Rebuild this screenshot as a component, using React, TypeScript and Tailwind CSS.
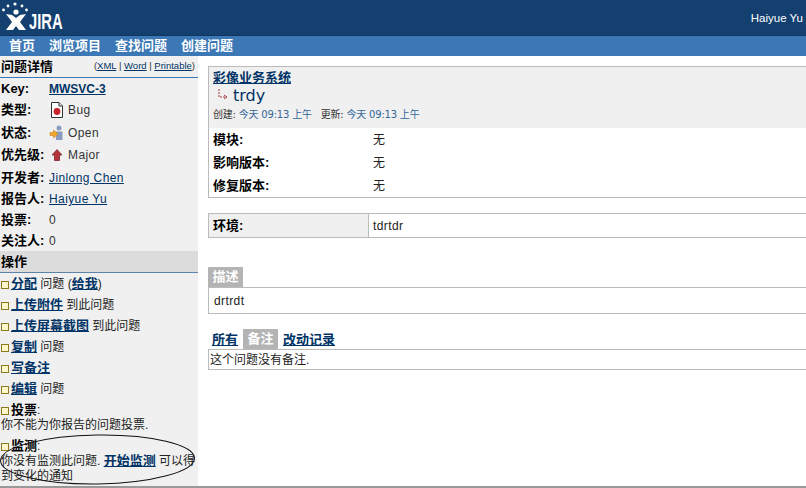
import type { ReactNode } from "react";

const FONT = "font-['Liberation_Sans','Noto_Sans_CJK_SC',sans-serif]";

function A({ children, bold = false }: { children: ReactNode; bold?: boolean }) {
  return (
    <a href="#" className={`text-[#003366] underline ${bold ? "text-[13px] font-bold leading-none" : ""}`}>
      {children}
    </a>
  );
}

function Logo() {
  return (
    <div className="flex items-start">
      <svg width="29" height="32" viewBox="0 0 29 32" fill="white">
        <circle cx="3.5" cy="10" r="1.4" />
        <circle cx="8" cy="6" r="1.4" />
        <circle cx="15" cy="4" r="1.6" />
        <circle cx="22" cy="6" r="1.4" />
        <circle cx="26.5" cy="10" r="1.4" />
        <circle cx="16" cy="12" r="2.6" />
        <path d="M6 14 L12 15 L16 18 L20 15 L26 14 L20 22 L26 30 L19 30 L16 26 L13 30 L6 30 L12 22 Z" />
      </svg>
      <span className="mt-[13px] origin-left scale-x-[0.67] text-[22px] font-bold leading-[18px] text-white">
        JIRA
      </span>
    </div>
  );
}

function Field({ label, h = "h-[21px]", children }: { label: string; h?: string; children: ReactNode }) {
  return (
    <div className={`flex ${h} items-center pl-[1px]`}>
      <span className="w-[48px] shrink-0 text-[13px] font-bold text-black">{label}</span>
      <div className="flex items-center tracking-[0.4px] text-[#333]">{children}</div>
    </div>
  );
}

function BugIcon() {
  return (
    <svg width="16" height="16" viewBox="0 0 16 16" className="mr-[3px]">
      <path d="M2.5 0.5 H10 L13.5 4 V15.5 H2.5 Z" fill="white" stroke="#333" />
      <path d="M10 0.5 V4 H13.5" fill="#ddd" stroke="#333" />
      <circle cx="8" cy="9.5" r="3.4" fill="#c8232c" />
    </svg>
  );
}

function OpenIcon() {
  return (
    <svg width="16" height="16" viewBox="0 0 16 16" className="mr-[3px]">
      <circle cx="10" cy="3" r="2.5" fill="#8a9dc0" />
      <path d="M6.5 6.5 H13.5 V15 H7 Z" fill="#8a9dc0" />
      <path d="M1 7.5 H4.5 V5 L9 9 L4.5 13 V10.5 H1 Z" fill="#f5a623" stroke="#b9761a" strokeWidth="0.5" />
    </svg>
  );
}

function MajorIcon() {
  return (
    <svg width="16" height="16" viewBox="0 0 16 16" className="mr-[3px]">
      <path d="M8 2.5 L13 8 H10.5 V13.5 H5.5 V8 H3 Z" fill="#b5333a" stroke="#6e1a1e" strokeWidth="0.7" />
    </svg>
  );
}

function Action({ children, sub }: { children: ReactNode; sub?: ReactNode }) {
  return (
    <div className="mb-[6px] leading-[15px]">
      <div className="flex h-[15px] items-center pl-[1px]">
        <span className="mr-[2px] h-[8px] w-[8px] shrink-0 border border-[#8a7a20] bg-[#fdf6c8]" />
        <span className="text-[#222]">{children}</span>
      </div>
      {sub && <div className="pl-[1px] text-[#222]">{sub}</div>}
    </div>
  );
}

function Sidebar() {
  return (
    <aside className="relative w-[198px] shrink-0 bg-[#f0f0f0]">
      <div className="flex h-[22px] items-center justify-between border-b border-[#3c78b5] pl-[1px] pr-[3px]">
        <span className="text-[13px] font-bold text-black">问题详情</span>
        <span className="text-[9.5px] text-[#333]">
          (<A>XML</A> | <A>Word</A> | <A>Printable</A>)
        </span>
      </div>
      <Field label="Key:">
        <span className="tracking-normal">
          <a href="#" className="font-bold text-[#003366] underline">
            MWSVC-3
          </a>
        </span>
      </Field>
      <Field label="类型:" h="h-[22px]">
        <BugIcon />
        Bug
      </Field>
      <Field label="状态:" h="h-[23px]">
        <OpenIcon />
        Open
      </Field>
      <Field label="优先级:" h="h-[22px]">
        <MajorIcon />
        Major
      </Field>
      <Field label="开发者:" h="h-[23px]">
        <A>Jinlong Chen</A>
      </Field>
      <Field label="报告人:" h="h-[20px]">
        <A>Haiyue Yu</A>
      </Field>
      <Field label="投票:">0</Field>
      <Field label="关注人:">0</Field>
      <div className="flex h-[22px] items-center border-b border-[#5d84a8] bg-[#dcdcdc] pl-[1px] text-[13px] font-bold text-black">
        操作
      </div>
      <div className="pt-[4px]">
        <Action>
          <A bold>分配</A> 问题 (<A bold>给我</A>)
        </Action>
        <Action>
          <A bold>上传附件</A> 到此问题
        </Action>
        <Action>
          <A bold>上传屏幕截图</A> 到此问题
        </Action>
        <Action>
          <A bold>复制</A> 问题
        </Action>
        <Action>
          <A bold>写备注</A>
        </Action>
        <Action>
          <A bold>编辑</A> 问题
        </Action>
        <Action sub="你不能为你报告的问题投票.">
          <b className="text-[13px] leading-none text-black">投票</b>:
        </Action>
        <Action
          sub={
            <>
              你没有监测此问题. <A bold>开始监测</A> 可以得到变化的通知
            </>
          }
        >
          <b className="text-[13px] leading-none text-black">监测</b>:
        </Action>
      </div>
      {/* hand-drawn annotation over the watch action */}
      <svg width="198" height="52" viewBox="0 0 198 52" className="absolute bottom-0 left-0" fill="none">
        <ellipse cx="97.5" cy="25.5" rx="97" ry="24.5" stroke="#111" strokeWidth="1" transform="rotate(-0.8 97 26)" />
      </svg>
    </aside>
  );
}

function Row({ label, value }: { label: string; value: string }) {
  return (
    <div className="flex h-[23px] items-center">
      <span className="w-[160px] shrink-0 pl-[4px] text-[13px] font-bold text-black">{label}</span>
      <span className="pl-[4px] text-[#222]">{value}</span>
    </div>
  );
}

function Main() {
  return (
    <main className="min-w-0 flex-1 pl-[10px] pt-[10px]">
      <div className="border border-r-0 border-[#bbbbbb]">
        <div className="h-[61px] bg-[#f0f0f0] pl-[4px] pt-[4px]">
          <div className="leading-[15px]">
            <A bold>彩像业务系统</A>
          </div>
          <div className="flex h-[20px] items-center pl-[4px]">
            <svg width="13" height="14" viewBox="0 0 13 14" fill="none" stroke="#a5413f" className="mr-[3px]">
              <path d="M2 0 V8 H9" strokeDasharray="2 1" />
              <path d="M7 6 L10 8 L7 10" />
            </svg>
            <span className="font-['DejaVu_Sans',sans-serif] text-[16px] text-[#003366]">trdy</span>
          </div>
          <div className="mt-[2px] flex font-['DejaVu_Sans','Noto_Sans_CJK_SC',sans-serif] text-[10px] leading-[14px] tracking-[-0.2px] text-[#333]">
            <span>
              创建: <span className="text-[#336699]">今天 09:13 上午</span>
            </span>
            <span className="ml-[9px]">
              更新: <span className="text-[#336699]">今天 09:13 上午</span>
            </span>
          </div>
        </div>
        <Row label="模块:" value="无" />
        <Row label="影响版本:" value="无" />
        <Row label="修复版本:" value="无" />
      </div>

      <div className="mt-[15px] flex h-[25px] border border-r-0 border-[#bbbbbb]">
        <div className="flex w-[160px] items-center border-r border-[#bbbbbb] bg-[#f0f0f0] pl-[4px] text-[13px] font-bold text-black">
          环境:
        </div>
        <div className="flex items-center pl-[4px] tracking-[0.4px] text-[#222]">tdrtdr</div>
      </div>

      <div className="mt-[29px] flex h-[20px] w-[35px] items-center justify-center bg-[#b4b4b4] text-[13px] font-bold text-white">
        描述
      </div>
      <div className="flex h-[27px] items-center border border-r-0 border-[#bbbbbb] pl-[5px] tracking-[0.4px] text-[#222]">
        drtrdt
      </div>

      <div className="mt-[15px] flex h-[20px] items-center pl-[4px]">
        <A bold>所有</A>
        <span className="mx-[5px] flex h-[20px] w-[35px] items-center justify-center bg-[#b4b4b4] text-[13px] font-bold text-white">
          备注
        </span>
        <A bold>改动记录</A>
      </div>
      <div className="flex h-[21px] items-center border border-r-0 border-[#bbbbbb] pl-[1px] text-[#222]">
        这个问题没有备注.
      </div>
    </main>
  );
}

export default function App() {
  return (
    <div className={`${FONT} flex h-[488px] w-[806px] flex-col overflow-hidden border-b-2 border-[#999] bg-white text-[12px]`}>
      <header className="flex h-[36px] shrink-0 items-start justify-between overflow-hidden border-b border-[#0f3560] bg-[#14406f]">
        <Logo />
        <span className="pr-[3px] pt-[10px] text-[11.5px] text-white">Haiyue Yu</span>
      </header>
      <nav className="flex h-[20px] shrink-0 items-center gap-[14px] bg-[#3c78b5] pl-[9px] text-[13px] font-bold text-white">
        <span>首页</span>
        <span>浏览项目</span>
        <span>查找问题</span>
        <span>创建问题</span>
      </nav>
      <div className="flex min-h-0 flex-1">
        <Sidebar />
        <Main />
      </div>
    </div>
  );
}
